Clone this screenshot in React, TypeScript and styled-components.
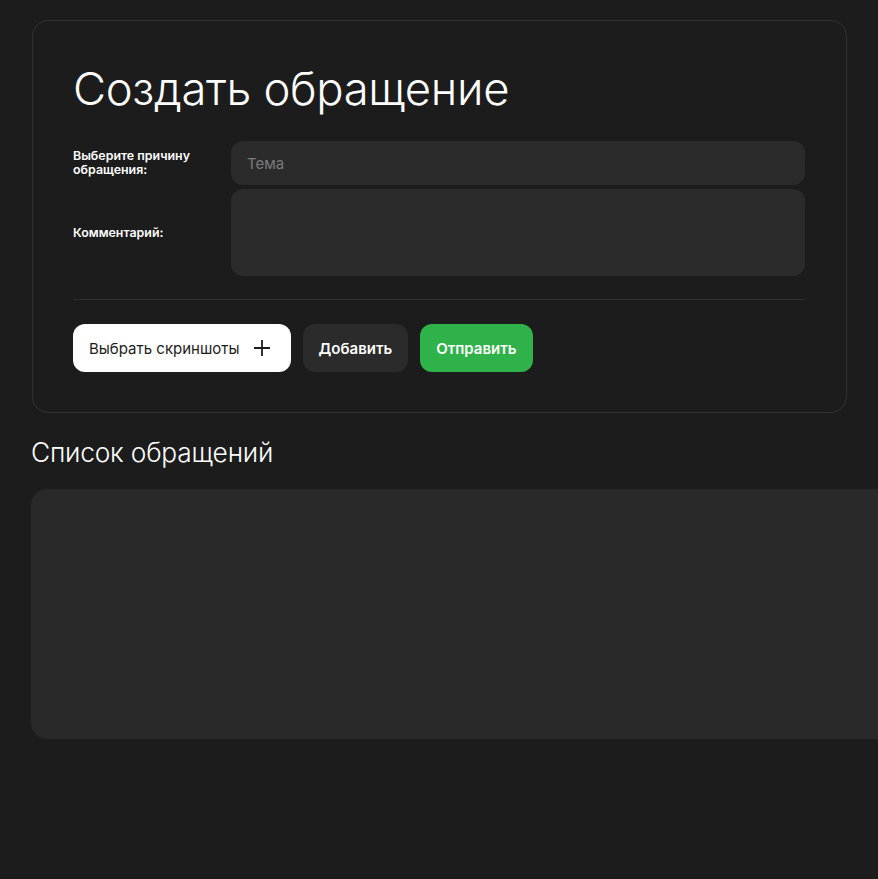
import styled, { createGlobalStyle } from "styled-components";

const GlobalStyle = createGlobalStyle`
  html, body {
    margin: 0;
    padding: 0;
    background: #1c1c1c;
    font-family: Inter, "Noto Sans", sans-serif;
    color: #fff;
    overflow: hidden;
  }
  * {
    box-sizing: border-box;
  }
`;

const Page = styled.div`
  width: 100%;
  min-height: 879px;
  padding: 20px 31px;
  overflow: hidden;
`;

const FormCard = styled.section`
  margin-left: 1px;
  border: 1px solid #323232;
  border-radius: 16px;
  padding: 40px;
`;

const Title = styled.h1`
  margin: 0 0 24px;
  font-size: 45.4px;
  font-weight: 300;
  line-height: 56px;
  letter-spacing: -0.3px;
`;

const FieldRow = styled.div`
  display: grid;
  grid-template-columns: 158px 1fr;
  align-items: center;
  margin-bottom: 4px;
  padding-right: 1px;
`;

const Label = styled.label`
  font-size: 12.4px;
  font-weight: 600;
  line-height: 14px;
  color: #fff;
`;

const TextInput = styled.input`
  height: 44px;
  width: 100%;
  border: none;
  outline: none;
  border-radius: 12px;
  background: #2b2b2b;
  padding: 0 16px;
  font-family: inherit;
  font-size: 15px;
  color: #fff;
  &::placeholder {
    color: #7a7a7a;
  }
`;

const TextArea = styled.textarea`
  height: 87px;
  width: 100%;
  border: none;
  outline: none;
  resize: none;
  border-radius: 12px;
  background: #2b2b2b;
  padding: 12px 16px;
  font-family: inherit;
  font-size: 15px;
  color: #fff;
  display: block;
`;

const Divider = styled.hr`
  border: none;
  border-top: 1px solid #2e2e2e;
  margin: 23px 0 24px;
`;

const Actions = styled.div`
  display: flex;
  gap: 12px;
`;

const Button = styled.button<{ $variant: "light" | "dark" | "green" }>`
  height: 48px;
  border: none;
  border-radius: 12px;
  padding: ${(p) => (p.$variant === "light" ? "0 19px 0 16px" : "0 16px")};
  display: flex;
  align-items: center;
  gap: 12px;
  font-family: inherit;
  font-size: 15px;
  cursor: pointer;
  font-weight: ${(p) => (p.$variant === "light" ? 400 : 600)};
  background: ${(p) =>
    p.$variant === "light" ? "#ffffff" : p.$variant === "dark" ? "#2b2b2b" : "#2fb24a"};
  color: ${(p) => (p.$variant === "light" ? "#1c1c1c" : "#ffffff")};
`;

const SubTitle = styled.h2`
  margin: 24px 0 20px;
  font-size: 26.3px;
  font-weight: 300;
  line-height: 32px;
  letter-spacing: -0.2px;
`;

const ListBox = styled.div`
  height: 250px;
  margin-right: -80px;
  border-radius: 16px;
  background: #292929;
`;

function PlusIcon() {
  return (
    <svg width="20" height="20" viewBox="0 0 20 20" fill="none">
      <path d="M10 2v16M2 10h16" stroke="#1c1c1c" strokeWidth="1.8" />
    </svg>
  );
}

export default function App() {
  return (
    <>
      <GlobalStyle />
      <Page>
        <FormCard>
          <Title>Создать обращение</Title>
          <FieldRow>
            <Label>
              Выберите причину
              <br />
              обращения:
            </Label>
            <TextInput placeholder="Тема" />
          </FieldRow>
          <FieldRow>
            <Label>Комментарий:</Label>
            <TextArea />
          </FieldRow>
          <Divider />
          <Actions>
            <Button $variant="light">
              Выбрать скриншоты
              <PlusIcon />
            </Button>
            <Button $variant="dark">Добавить</Button>
            <Button $variant="green">Отправить</Button>
          </Actions>
        </FormCard>
        <SubTitle>Список обращений</SubTitle>
        <ListBox />
      </Page>
    </>
  );
}
